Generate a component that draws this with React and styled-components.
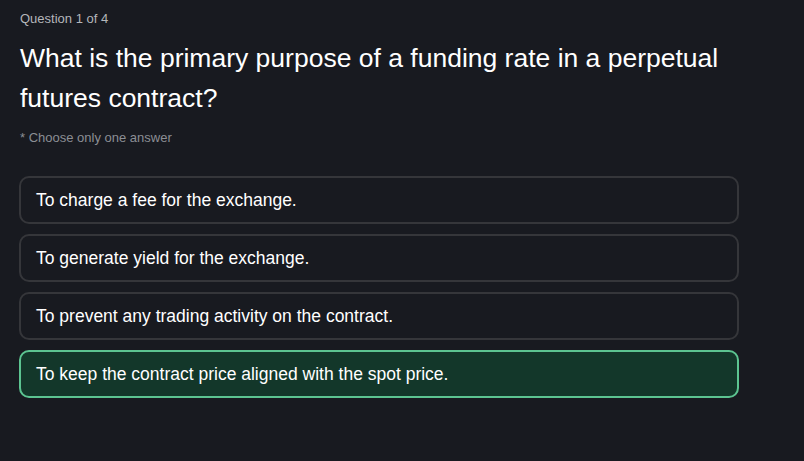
import React from 'react'
import styled, { createGlobalStyle } from 'styled-components'

const GlobalStyle = createGlobalStyle`
  html, body {
    margin: 0;
    padding: 0;
    background: #181a20;
  }
  body {
    font-family: "Liberation Sans", Arial, sans-serif;
    min-height: 100vh;
  }
`

const Quiz = styled.section`
  width: 720px;
  padding: 10px 20px 0 19px;
  display: flex;
  flex-direction: column;
`

const Counter = styled.div`
  font-size: 13px;
  line-height: 18px;
  color: #b4b6ba;
  padding-left: 1px;
`

const Title = styled.h1`
  margin: 10px 0 0 1px;
  font-size: 26.5px;
  line-height: 40px;
  font-weight: 400;
  color: #ffffff;
`

const Hint = styled.div`
  margin: 11px 0 0 1px;
  font-size: 13px;
  line-height: 18px;
  color: #8b8e94;
`

const Options = styled.div`
  margin-top: 29px;
  display: flex;
  flex-direction: column;
  gap: 10px;
`

const Option = styled.button`
  box-sizing: border-box;
  width: 720px;
  height: 48px;
  padding: 0 15px;
  display: flex;
  align-items: center;
  text-align: left;
  border-radius: 10px;
  border: 2px solid ${p => (p.$selected ? '#5cc491' : '#35363a')};
  background: ${p => (p.$selected ? '#13372a' : '#181a20')};
  color: #ffffff;
  font-family: inherit;
  font-size: 17.5px;
  cursor: pointer;
`

const answers = [
  'To charge a fee for the exchange.',
  'To generate yield for the exchange.',
  'To prevent any trading activity on the contract.',
  'To keep the contract price aligned with the spot price.',
]

const App = () => {
  const selected = 3

  return (
    <>
      <GlobalStyle />
      <Quiz>
        <Counter>Question 1 of 4</Counter>
        <Title>
          What is the primary purpose of a funding rate in a perpetual futures contract?
        </Title>
        <Hint>* Choose only one answer</Hint>
        <Options>
          {answers.map((answer, i) => (
            <Option key={answer} $selected={i === selected}>
              {answer}
            </Option>
          ))}
        </Options>
      </Quiz>
    </>
  )
}

export default App
